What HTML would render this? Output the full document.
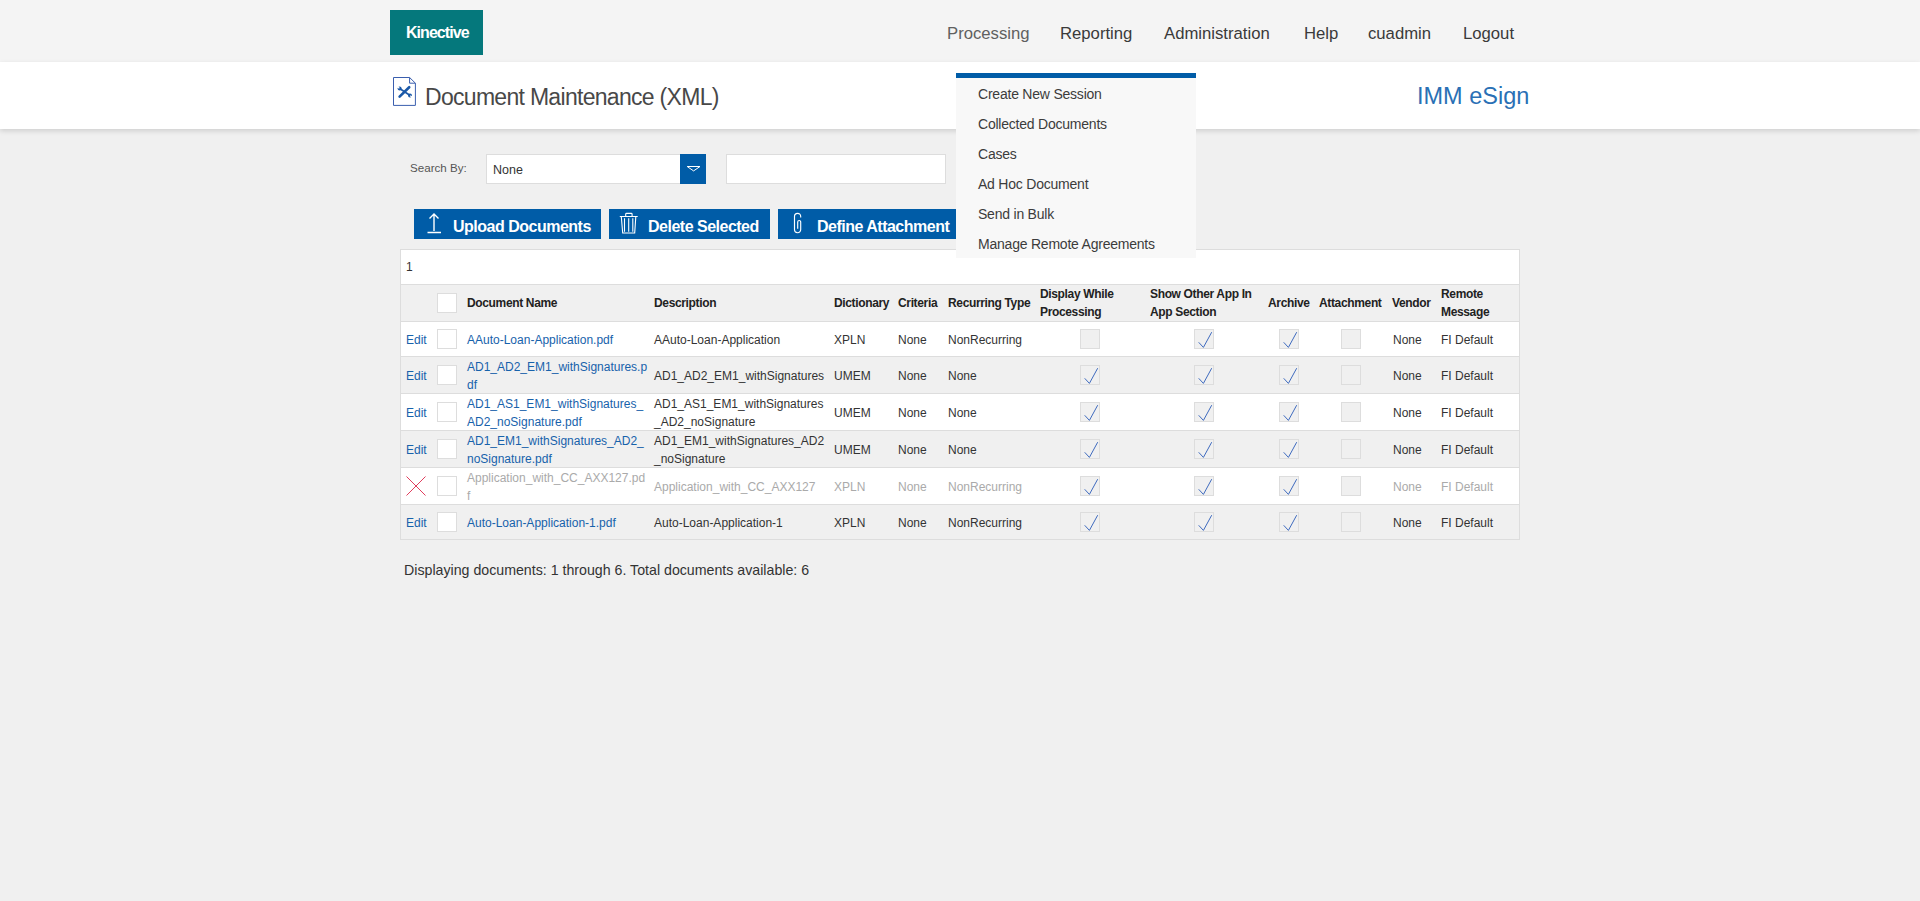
<!DOCTYPE html>
<html><head><meta charset="utf-8">
<style>
*{margin:0;padding:0;box-sizing:border-box}
html,body{width:1920px;height:901px;overflow:hidden;background:#f0f0f0;font-family:"Liberation Sans",sans-serif;color:#333}
.a{position:absolute}
.t{position:absolute;white-space:nowrap;line-height:1}
#hdr{position:absolute;left:0;top:0;width:1920px;height:62px;background:#f4f4f4}
#band{position:absolute;left:0;top:62px;width:1920px;height:67px;background:#fff;box-shadow:0 2px 5px rgba(0,0,0,.14)}
#logo{position:absolute;left:390px;top:10px;width:93px;height:45px;background:#05787c}
.nav{font-size:16.7px;color:#3a3a3a}
.menu{position:absolute;left:956px;top:73px;width:240px;height:185px;background:#f8f8f8;border-top:5px solid #005ca7}
.mi{font-size:14px;color:#3c3c3c;letter-spacing:-0.22px}
.sel{position:absolute;left:486px;top:154px;width:220px;height:30px;background:#fff;border:1px solid #ddd}
.selbtn{position:absolute;left:680px;top:154px;width:26px;height:30px;background:#005ca7}
.inp{position:absolute;left:726px;top:154px;width:220px;height:30px;background:#fff;border:1px solid #ddd}
.btn{position:absolute;top:209px;height:30px;background:#005ca7}
.bt{font-size:16px;font-weight:bold;color:#fff;letter-spacing:-0.5px;margin-top:1px}
#tbl{position:absolute;left:400px;top:249px;width:1120px;height:291px;border:1px solid #ddd;background:#fff}
.row{position:absolute;left:401px;width:1118px}
.g{background:#f0f0f0}
.hl{position:absolute;left:401px;width:1118px;height:1px;background:#ddd}
.c{font-size:12px;color:#333}
.h{font-size:12px;font-weight:bold;color:#222;letter-spacing:-0.35px}
.l{color:#1762ab}
.dis{color:#aaa}
.cb{position:absolute;width:20px;height:20px;border:1px solid #ddd;background:#fff}
.cbg{position:absolute;width:20px;height:20px;border:1px solid #ddd;background:#f0f0f0}
</style></head><body>
<div id="hdr"></div>
<div id="band"></div>
<div id="logo"></div>
<div class="t" style="left:406px;top:25px;font-size:16px;font-weight:bold;color:#fff;letter-spacing:-0.95px">Kinective</div>

<div class="t nav" style="left:947px;top:26px;color:#606060">Processing</div>
<div class="t nav" style="left:1060px;top:26px">Reporting</div>
<div class="t nav" style="left:1164px;top:26px">Administration</div>
<div class="t nav" style="left:1304px;top:26px">Help</div>
<div class="t nav" style="left:1368px;top:26px">cuadmin</div>
<div class="t nav" style="left:1463px;top:26px">Logout</div>

<!-- title icon -->
<svg class="a" style="left:390px;top:74px" width="30" height="36" viewBox="0 0 30 36">
<path d="M3.5 3.5 H19.6 L25.4 9.2 V31.4 H3.5 Z" fill="#fff" stroke="#3a5eae" stroke-width="1"/>
<path d="M19.6 3.5 V9.2 H25.4" fill="none" stroke="#3a5eae" stroke-width="1"/>
<path d="M9.6 22.6 L19.2 13.2" stroke="#1a58a8" stroke-width="2.6" stroke-linecap="round"/>
<path d="M10.4 15 L19.4 21" stroke="#1a58a8" stroke-width="1.7"/>
<circle cx="9.6" cy="14.4" r="2" fill="#1a58a8"/><circle cx="20" cy="21.6" r="2" fill="#1a58a8"/>
<path d="M7.6 13 L9.4 14.3 M22 23 L20.2 21.7" stroke="#fff" stroke-width="1.3"/>
</svg>
<div class="t" style="left:425px;top:86px;font-size:23px;letter-spacing:-0.7px;color:#484848">Document Maintenance (XML)</div>
<div class="t" style="left:1417px;top:85px;font-size:23.5px;color:#2a70b5">IMM eSign</div>

<!-- search -->
<div class="t" style="left:410px;top:162px;font-size:11.6px;color:#555">Search By:</div>
<div class="sel"></div>
<div class="t" style="left:493px;top:164px;font-size:12.5px;color:#333">None</div>
<div class="selbtn"></div>
<svg class="a" style="left:686px;top:165px" width="16" height="8" viewBox="0 0 16 8"><path d="M1.2 1.5 H14 L7.6 5.9 Z" fill="none" stroke="#fff" stroke-width="1"/></svg>
<div class="inp"></div>

<!-- buttons -->
<div class="btn" style="left:414px;width:187px"></div>
<svg class="a" style="left:426px;top:212px" width="16" height="22" viewBox="0 0 16 22"><path d="M8 2 V19 M3.5 6.5 L8 2 L12.5 6.5 M1.5 20.5 H15" fill="none" stroke="#fff" stroke-width="1.4"/></svg>
<div class="t bt" style="left:453px;top:218px">Upload Documents</div>
<div class="btn" style="left:609px;width:161px"></div>
<svg class="a" style="left:612px;top:207px" width="30" height="30" viewBox="0 0 30 30"><path d="M7.8 9.5 H25.7 M13.7 9.3 V7.2 Q13.7 6.4 14.5 6.4 H19.3 Q20.1 6.4 20.1 7.2 V9.3 M9.3 9.8 L10.7 26 H22.7 L23.8 9.8 M12.5 11.2 V24.8 M16.7 11.2 V24.8 M20.8 11.2 V24.8" fill="none" stroke="#fff" stroke-width="1.1"/></svg>
<div class="t bt" style="left:648px;top:218px">Delete Selected</div>
<div class="btn" style="left:778px;width:178px"></div>
<svg class="a" style="left:785px;top:207px" width="24" height="30" viewBox="0 0 24 30"><path d="M12.7 21.7 V15 A1.5 1.5 0 0 1 15.7 15 V22.6 A3.1 3.1 0 0 1 9.5 22.6 V9.4 A3.1 3.1 0 0 1 15.7 9.4 V10.5" fill="none" stroke="#fff" stroke-width="1.15"/></svg>
<div class="t bt" style="left:817px;top:218px">Define Attachment</div>

<!-- table -->
<div id="tbl"></div>
<div class="row g" style="top:285px;height:36px"></div>
<div class="row g" style="top:357px;height:36px"></div>
<div class="row g" style="top:431px;height:36px"></div>
<div class="row g" style="top:505px;height:34px"></div>
<div class="hl" style="top:284px"></div>
<div class="hl" style="top:321px"></div>
<div class="hl" style="top:356px"></div>
<div class="hl" style="top:393px"></div>
<div class="hl" style="top:430px"></div>
<div class="hl" style="top:467px"></div>
<div class="hl" style="top:504px"></div>
<div class="t c" style="left:406px;top:261px">1</div>

<!--CELLS-->
<div class="t c l" style="left:406px;top:334px">Edit</div>
<div class="cb" style="left:437px;top:329px"></div>
<div class="t c l" style="left:467px;top:334px">AAuto-Loan-Application.pdf</div>
<div class="t c" style="left:654px;top:334px">AAuto-Loan-Application</div>
<div class="t c" style="left:834px;top:334px">XPLN</div>
<div class="t c" style="left:898px;top:334px">None</div>
<div class="t c" style="left:948px;top:334px">NonRecurring</div>
<div class="cbg" style="left:1080px;top:329px"></div>
<div class="cbg" style="left:1194px;top:329px"></div>
<svg class="a" style="left:1194px;top:329px" width="20" height="20" viewBox="0 0 20 20"><path d="M4.7 13.3 L9.4 18.4 L17.7 3.2" fill="none" stroke="#3f6bbf" stroke-width="1"/></svg>
<div class="cbg" style="left:1279px;top:329px"></div>
<svg class="a" style="left:1279px;top:329px" width="20" height="20" viewBox="0 0 20 20"><path d="M4.7 13.3 L9.4 18.4 L17.7 3.2" fill="none" stroke="#3f6bbf" stroke-width="1"/></svg>
<div class="cbg" style="left:1341px;top:329px"></div>
<div class="t c" style="left:1393px;top:334px">None</div>
<div class="t c" style="left:1441px;top:334px">FI Default</div>
<div class="t c l" style="left:406px;top:370px">Edit</div>
<div class="cb" style="left:437px;top:365px"></div>
<div class="t c l" style="left:467px;top:361px">AD1_AD2_EM1_withSignatures.p</div>
<div class="t c l" style="left:467px;top:379px">df</div>
<div class="t c" style="left:654px;top:370px">AD1_AD2_EM1_withSignatures</div>
<div class="t c" style="left:834px;top:370px">UMEM</div>
<div class="t c" style="left:898px;top:370px">None</div>
<div class="t c" style="left:948px;top:370px">None</div>
<div class="cbg" style="left:1080px;top:365px"></div>
<svg class="a" style="left:1080px;top:365px" width="20" height="20" viewBox="0 0 20 20"><path d="M4.7 13.3 L9.4 18.4 L17.7 3.2" fill="none" stroke="#3f6bbf" stroke-width="1"/></svg>
<div class="cbg" style="left:1194px;top:365px"></div>
<svg class="a" style="left:1194px;top:365px" width="20" height="20" viewBox="0 0 20 20"><path d="M4.7 13.3 L9.4 18.4 L17.7 3.2" fill="none" stroke="#3f6bbf" stroke-width="1"/></svg>
<div class="cbg" style="left:1279px;top:365px"></div>
<svg class="a" style="left:1279px;top:365px" width="20" height="20" viewBox="0 0 20 20"><path d="M4.7 13.3 L9.4 18.4 L17.7 3.2" fill="none" stroke="#3f6bbf" stroke-width="1"/></svg>
<div class="cbg" style="left:1341px;top:365px"></div>
<div class="t c" style="left:1393px;top:370px">None</div>
<div class="t c" style="left:1441px;top:370px">FI Default</div>
<div class="t c l" style="left:406px;top:407px">Edit</div>
<div class="cb" style="left:437px;top:402px"></div>
<div class="t c l" style="left:467px;top:398px">AD1_AS1_EM1_withSignatures_</div>
<div class="t c l" style="left:467px;top:416px">AD2_noSignature.pdf</div>
<div class="t c" style="left:654px;top:398px">AD1_AS1_EM1_withSignatures</div>
<div class="t c" style="left:654px;top:416px">_AD2_noSignature</div>
<div class="t c" style="left:834px;top:407px">UMEM</div>
<div class="t c" style="left:898px;top:407px">None</div>
<div class="t c" style="left:948px;top:407px">None</div>
<div class="cbg" style="left:1080px;top:402px"></div>
<svg class="a" style="left:1080px;top:402px" width="20" height="20" viewBox="0 0 20 20"><path d="M4.7 13.3 L9.4 18.4 L17.7 3.2" fill="none" stroke="#3f6bbf" stroke-width="1"/></svg>
<div class="cbg" style="left:1194px;top:402px"></div>
<svg class="a" style="left:1194px;top:402px" width="20" height="20" viewBox="0 0 20 20"><path d="M4.7 13.3 L9.4 18.4 L17.7 3.2" fill="none" stroke="#3f6bbf" stroke-width="1"/></svg>
<div class="cbg" style="left:1279px;top:402px"></div>
<svg class="a" style="left:1279px;top:402px" width="20" height="20" viewBox="0 0 20 20"><path d="M4.7 13.3 L9.4 18.4 L17.7 3.2" fill="none" stroke="#3f6bbf" stroke-width="1"/></svg>
<div class="cbg" style="left:1341px;top:402px"></div>
<div class="t c" style="left:1393px;top:407px">None</div>
<div class="t c" style="left:1441px;top:407px">FI Default</div>
<div class="t c l" style="left:406px;top:444px">Edit</div>
<div class="cb" style="left:437px;top:439px"></div>
<div class="t c l" style="left:467px;top:435px">AD1_EM1_withSignatures_AD2_</div>
<div class="t c l" style="left:467px;top:453px">noSignature.pdf</div>
<div class="t c" style="left:654px;top:435px">AD1_EM1_withSignatures_AD2</div>
<div class="t c" style="left:654px;top:453px">_noSignature</div>
<div class="t c" style="left:834px;top:444px">UMEM</div>
<div class="t c" style="left:898px;top:444px">None</div>
<div class="t c" style="left:948px;top:444px">None</div>
<div class="cbg" style="left:1080px;top:439px"></div>
<svg class="a" style="left:1080px;top:439px" width="20" height="20" viewBox="0 0 20 20"><path d="M4.7 13.3 L9.4 18.4 L17.7 3.2" fill="none" stroke="#3f6bbf" stroke-width="1"/></svg>
<div class="cbg" style="left:1194px;top:439px"></div>
<svg class="a" style="left:1194px;top:439px" width="20" height="20" viewBox="0 0 20 20"><path d="M4.7 13.3 L9.4 18.4 L17.7 3.2" fill="none" stroke="#3f6bbf" stroke-width="1"/></svg>
<div class="cbg" style="left:1279px;top:439px"></div>
<svg class="a" style="left:1279px;top:439px" width="20" height="20" viewBox="0 0 20 20"><path d="M4.7 13.3 L9.4 18.4 L17.7 3.2" fill="none" stroke="#3f6bbf" stroke-width="1"/></svg>
<div class="cbg" style="left:1341px;top:439px"></div>
<div class="t c" style="left:1393px;top:444px">None</div>
<div class="t c" style="left:1441px;top:444px">FI Default</div>
<svg class="a" style="left:406px;top:476px" width="20" height="20" viewBox="0 0 20 20"><path d="M0.5 0.5 L19.5 19.5 M19.5 0.5 L0.5 19.5" stroke="#e03d5c" stroke-width="1"/></svg>
<div class="cb" style="left:437px;top:476px"></div>
<div class="t c dis" style="left:467px;top:472px">Application_with_CC_AXX127.pd</div>
<div class="t c dis" style="left:467px;top:490px">f</div>
<div class="t c dis" style="left:654px;top:481px">Application_with_CC_AXX127</div>
<div class="t c dis" style="left:834px;top:481px">XPLN</div>
<div class="t c dis" style="left:898px;top:481px">None</div>
<div class="t c dis" style="left:948px;top:481px">NonRecurring</div>
<div class="cbg" style="left:1080px;top:476px"></div>
<svg class="a" style="left:1080px;top:476px" width="20" height="20" viewBox="0 0 20 20"><path d="M4.7 13.3 L9.4 18.4 L17.7 3.2" fill="none" stroke="#3f6bbf" stroke-width="1"/></svg>
<div class="cbg" style="left:1194px;top:476px"></div>
<svg class="a" style="left:1194px;top:476px" width="20" height="20" viewBox="0 0 20 20"><path d="M4.7 13.3 L9.4 18.4 L17.7 3.2" fill="none" stroke="#3f6bbf" stroke-width="1"/></svg>
<div class="cbg" style="left:1279px;top:476px"></div>
<svg class="a" style="left:1279px;top:476px" width="20" height="20" viewBox="0 0 20 20"><path d="M4.7 13.3 L9.4 18.4 L17.7 3.2" fill="none" stroke="#3f6bbf" stroke-width="1"/></svg>
<div class="cbg" style="left:1341px;top:476px"></div>
<div class="t c dis" style="left:1393px;top:481px">None</div>
<div class="t c dis" style="left:1441px;top:481px">FI Default</div>
<div class="t c l" style="left:406px;top:517px">Edit</div>
<div class="cb" style="left:437px;top:512px"></div>
<div class="t c l" style="left:467px;top:517px">Auto-Loan-Application-1.pdf</div>
<div class="t c" style="left:654px;top:517px">Auto-Loan-Application-1</div>
<div class="t c" style="left:834px;top:517px">XPLN</div>
<div class="t c" style="left:898px;top:517px">None</div>
<div class="t c" style="left:948px;top:517px">NonRecurring</div>
<div class="cbg" style="left:1080px;top:512px"></div>
<svg class="a" style="left:1080px;top:512px" width="20" height="20" viewBox="0 0 20 20"><path d="M4.7 13.3 L9.4 18.4 L17.7 3.2" fill="none" stroke="#3f6bbf" stroke-width="1"/></svg>
<div class="cbg" style="left:1194px;top:512px"></div>
<svg class="a" style="left:1194px;top:512px" width="20" height="20" viewBox="0 0 20 20"><path d="M4.7 13.3 L9.4 18.4 L17.7 3.2" fill="none" stroke="#3f6bbf" stroke-width="1"/></svg>
<div class="cbg" style="left:1279px;top:512px"></div>
<svg class="a" style="left:1279px;top:512px" width="20" height="20" viewBox="0 0 20 20"><path d="M4.7 13.3 L9.4 18.4 L17.7 3.2" fill="none" stroke="#3f6bbf" stroke-width="1"/></svg>
<div class="cbg" style="left:1341px;top:512px"></div>
<div class="t c" style="left:1393px;top:517px">None</div>
<div class="t c" style="left:1441px;top:517px">FI Default</div>
<div class="cb" style="left:437px;top:293px"></div>
<div class="t h" style="left:467px;top:297px">Document Name</div>
<div class="t h" style="left:654px;top:297px">Description</div>
<div class="t h" style="left:834px;top:297px">Dictionary</div>
<div class="t h" style="left:898px;top:297px">Criteria</div>
<div class="t h" style="left:948px;top:297px">Recurring Type</div>
<div class="t h" style="left:1040px;top:288px">Display While</div>
<div class="t h" style="left:1040px;top:306px">Processing</div>
<div class="t h" style="left:1150px;top:288px">Show Other App In</div>
<div class="t h" style="left:1150px;top:306px">App Section</div>
<div class="t h" style="left:1268px;top:297px">Archive</div>
<div class="t h" style="left:1319px;top:297px">Attachment</div>
<div class="t h" style="left:1392px;top:297px">Vendor</div>
<div class="t h" style="left:1441px;top:288px">Remote</div>
<div class="t h" style="left:1441px;top:306px">Message</div>
<!--/CELLS-->

<div class="t" style="left:404px;top:563px;font-size:14.2px;color:#333">Displaying documents: 1 through 6. Total documents available: 6</div>

<!-- dropdown menu -->
<div class="menu"></div>
<div class="t mi" style="left:978px;top:87px">Create New Session</div>
<div class="t mi" style="left:978px;top:117px">Collected Documents</div>
<div class="t mi" style="left:978px;top:147px">Cases</div>
<div class="t mi" style="left:978px;top:177px">Ad Hoc Document</div>
<div class="t mi" style="left:978px;top:207px">Send in Bulk</div>
<div class="t mi" style="left:978px;top:237px">Manage Remote Agreements</div>
</body></html>
